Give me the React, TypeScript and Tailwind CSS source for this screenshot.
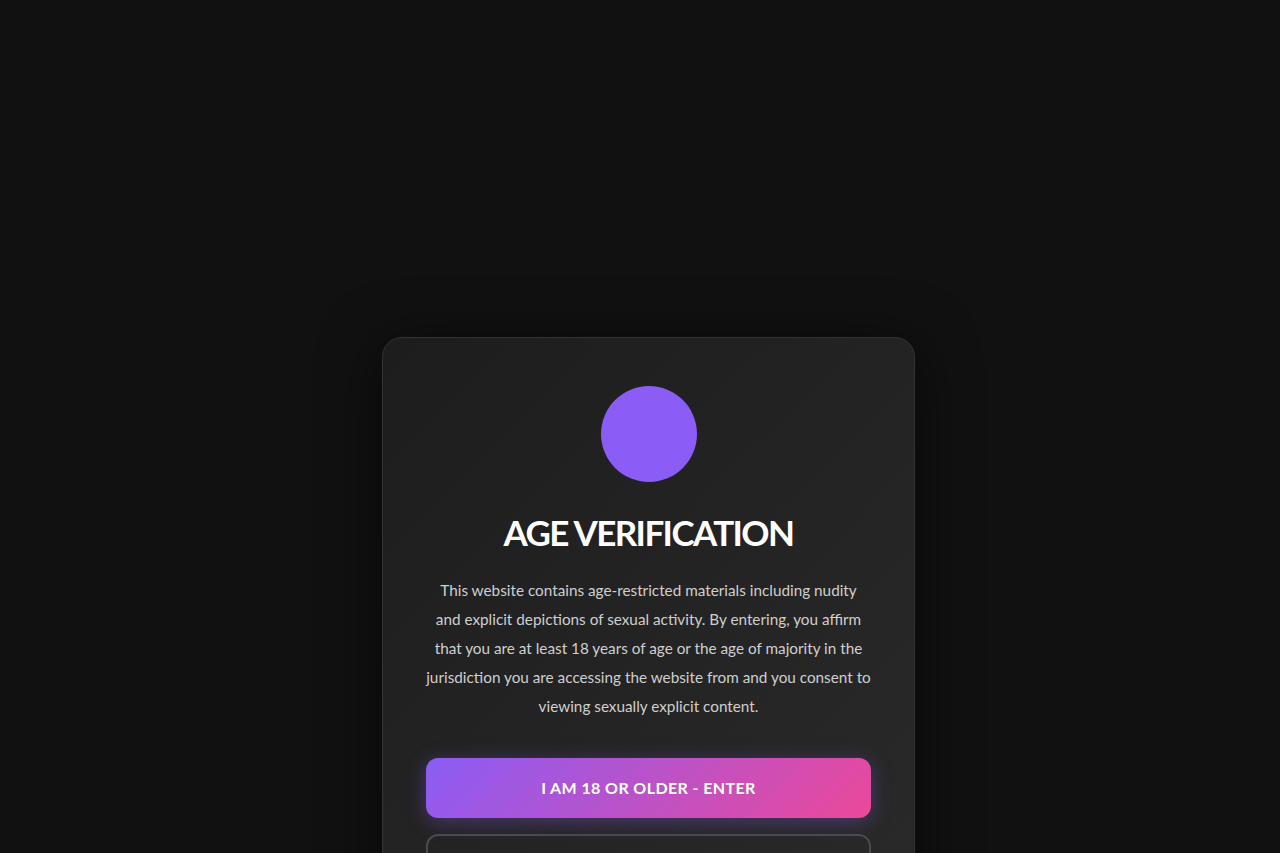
export default function App() {
  return (
    <div className="min-h-[853px] bg-[#111111] font-['Lato',sans-serif] overflow-hidden">
      <div className="flex justify-center pt-[337px] pl-[17px]">
        <section className="w-[533px] rounded-[20px] border border-[#333333] bg-[linear-gradient(135deg,#1d1d1d,#2a2a2a)] px-[43px] pt-[48px] pb-12 text-center shadow-[0_10px_60px_rgba(0,0,0,0.6)]">
          <div className="mx-auto h-24 w-24 rounded-full bg-[#8b5cf6]" />
          <h1 className="mt-[28px] text-[35px] font-bold leading-[44px] tracking-[-1.6px] text-white">
            AGE VERIFICATION
          </h1>
          <p className="mt-[22px] whitespace-nowrap text-[15.3px] leading-[29px] text-[#cfcfcf]">
            This website contains age-restricted materials including nudity
            <br />
            and explicit depictions of sexual activity. By entering, you affirm
            <br />
            that you are at least 18 years of age or the age of majority in the
            <br />
            jurisdiction you are accessing the website from and you consent to
            <br />
            viewing sexually explicit content.
          </p>
          <div className="mt-[37px] flex flex-col gap-4">
            <button className="h-[60px] w-full rounded-xl bg-[linear-gradient(135deg,#8b5cf6,#ec4899)] text-[16px] font-bold tracking-[0.4px] text-white shadow-[0_4px_20px_rgba(139,92,246,0.35)]">
              I AM 18 OR OLDER - ENTER
            </button>
            <button className="h-[60px] w-full rounded-xl border-2 border-[#4a4a4a] text-[16px] font-bold tracking-[0.4px] text-[#d0d0d0]">
              I AM UNDER 18 - EXIT
            </button>
          </div>
        </section>
      </div>
    </div>
  );
}
